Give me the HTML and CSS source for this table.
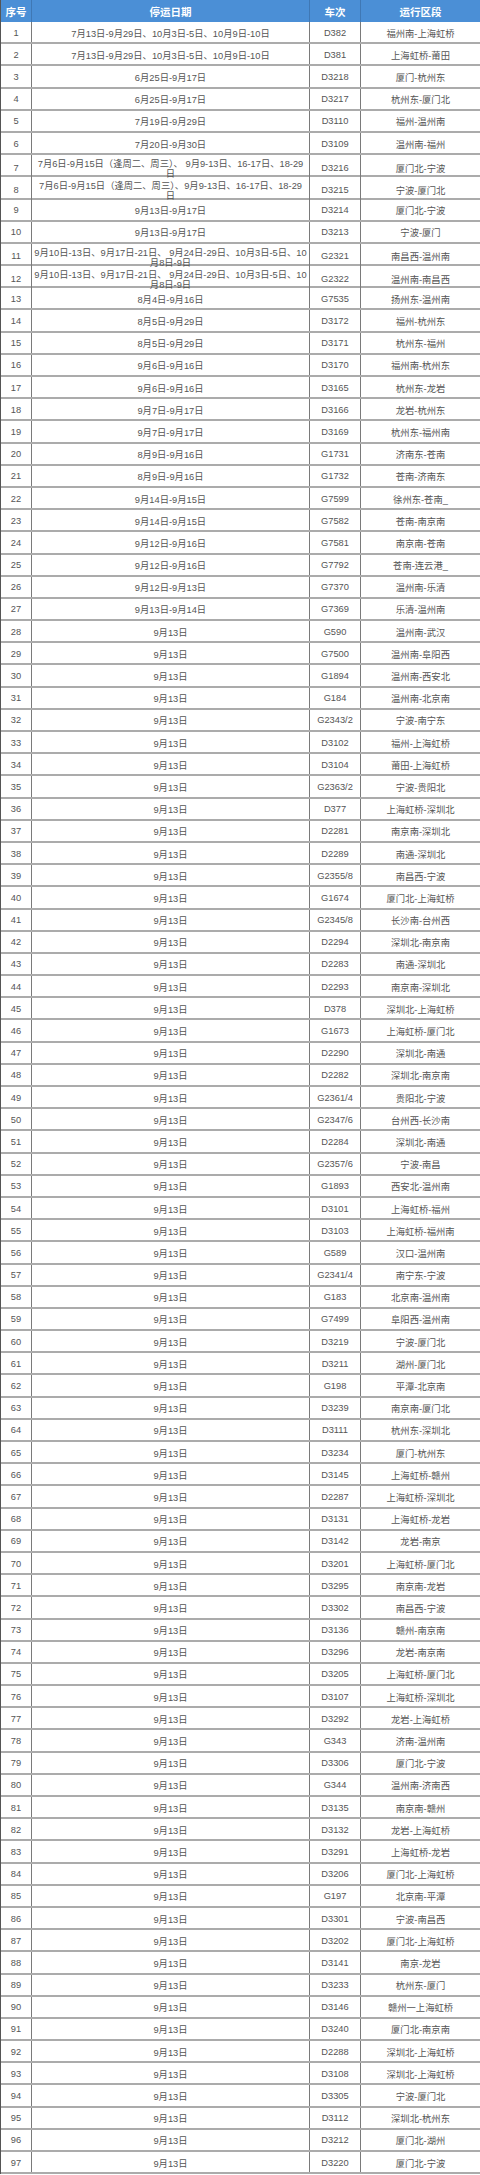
FILE: index.html
```html
<!DOCTYPE html>
<html lang="zh-CN">
<head>
<meta charset="utf-8">
<title>停运列表</title>
<link rel="stylesheet" href="styles.css">
</head>
<body>
<div class="table">
<div class="row head"><div class="c">序号</div><div class="c">停运日期</div><div class="c">车次</div><div class="c">运行区段</div></div>
<div class="row"><div class="c">1</div><div class="c">7月13日-9月29日、10月3日-5日、10月9日-10日</div><div class="c">D382</div><div class="c">福州南-上海虹桥</div></div>
<div class="row"><div class="c">2</div><div class="c">7月13日-9月29日、10月3日-5日、10月9日-10日</div><div class="c">D381</div><div class="c">上海虹桥-莆田</div></div>
<div class="row"><div class="c">3</div><div class="c">6月25日-9月17日</div><div class="c">D3218</div><div class="c">厦门-杭州东</div></div>
<div class="row"><div class="c">4</div><div class="c">6月25日-9月17日</div><div class="c">D3217</div><div class="c">杭州东-厦门北</div></div>
<div class="row"><div class="c">5</div><div class="c">7月19日-9月29日</div><div class="c">D3110</div><div class="c">福州-温州南</div></div>
<div class="row"><div class="c">6</div><div class="c">7月20日-9月30日</div><div class="c">D3109</div><div class="c">温州南-福州</div></div>
<div class="row"><div class="c">7</div><div class="c multi"><span class="ln">7月6日-9月15日（逢周二、周三）、 9月9-13日、16-17日、18-29</span><span class="ln">日</span></div><div class="c">D3216</div><div class="c">厦门北-宁波</div></div>
<div class="row"><div class="c">8</div><div class="c multi"><span class="ln">7月6日-9月15日（逢周二、周三）、9月9-13日、16-17日、18-29</span><span class="ln">日</span></div><div class="c">D3215</div><div class="c">宁波-厦门北</div></div>
<div class="row"><div class="c">9</div><div class="c">9月13日-9月17日</div><div class="c">D3214</div><div class="c">厦门北-宁波</div></div>
<div class="row"><div class="c">10</div><div class="c">9月13日-9月17日</div><div class="c">D3213</div><div class="c">宁波-厦门</div></div>
<div class="row"><div class="c">11</div><div class="c multi"><span class="ln">9月10日-13日、9月17日-21日、 9月24日-29日、10月3日-5日、10</span><span class="ln">月8日-9日</span></div><div class="c">G2321</div><div class="c">南昌西-温州南</div></div>
<div class="row"><div class="c">12</div><div class="c multi"><span class="ln">9月10日-13日、9月17日-21日、 9月24日-29日、10月3日-5日、10</span><span class="ln">月8日-9日</span></div><div class="c">G2322</div><div class="c">温州南-南昌西</div></div>
<div class="row"><div class="c">13</div><div class="c">8月4日-9月16日</div><div class="c">G7535</div><div class="c">扬州东-温州南</div></div>
<div class="row"><div class="c">14</div><div class="c">8月5日-9月29日</div><div class="c">D3172</div><div class="c">福州-杭州东</div></div>
<div class="row"><div class="c">15</div><div class="c">8月5日-9月29日</div><div class="c">D3171</div><div class="c">杭州东-福州</div></div>
<div class="row"><div class="c">16</div><div class="c">9月6日-9月16日</div><div class="c">D3170</div><div class="c">福州南-杭州东</div></div>
<div class="row"><div class="c">17</div><div class="c">9月6日-9月16日</div><div class="c">D3165</div><div class="c">杭州东-龙岩</div></div>
<div class="row"><div class="c">18</div><div class="c">9月7日-9月17日</div><div class="c">D3166</div><div class="c">龙岩-杭州东</div></div>
<div class="row"><div class="c">19</div><div class="c">9月7日-9月17日</div><div class="c">D3169</div><div class="c">杭州东-福州南</div></div>
<div class="row"><div class="c">20</div><div class="c">8月9日-9月16日</div><div class="c">G1731</div><div class="c">济南东-苍南</div></div>
<div class="row"><div class="c">21</div><div class="c">8月9日-9月16日</div><div class="c">G1732</div><div class="c">苍南-济南东</div></div>
<div class="row"><div class="c">22</div><div class="c">9月14日-9月15日</div><div class="c">G7599</div><div class="c">徐州东-苍南_</div></div>
<div class="row"><div class="c">23</div><div class="c">9月14日-9月15日</div><div class="c">G7582</div><div class="c">苍南-南京南</div></div>
<div class="row"><div class="c">24</div><div class="c">9月12日-9月16日</div><div class="c">G7581</div><div class="c">南京南-苍南</div></div>
<div class="row"><div class="c">25</div><div class="c">9月12日-9月16日</div><div class="c">G7792</div><div class="c">苍南-连云港_</div></div>
<div class="row"><div class="c">26</div><div class="c">9月12日-9月13日</div><div class="c">G7370</div><div class="c">温州南-乐清</div></div>
<div class="row"><div class="c">27</div><div class="c">9月13日-9月14日</div><div class="c">G7369</div><div class="c">乐清-温州南</div></div>
<div class="row"><div class="c">28</div><div class="c">9月13日</div><div class="c">G590</div><div class="c">温州南-武汉</div></div>
<div class="row"><div class="c">29</div><div class="c">9月13日</div><div class="c">G7500</div><div class="c">温州南-阜阳西</div></div>
<div class="row"><div class="c">30</div><div class="c">9月13日</div><div class="c">G1894</div><div class="c">温州南-西安北</div></div>
<div class="row"><div class="c">31</div><div class="c">9月13日</div><div class="c">G184</div><div class="c">温州南-北京南</div></div>
<div class="row"><div class="c">32</div><div class="c">9月13日</div><div class="c">G2343/2</div><div class="c">宁波-南宁东</div></div>
<div class="row"><div class="c">33</div><div class="c">9月13日</div><div class="c">D3102</div><div class="c">福州-上海虹桥</div></div>
<div class="row"><div class="c">34</div><div class="c">9月13日</div><div class="c">D3104</div><div class="c">莆田-上海虹桥</div></div>
<div class="row"><div class="c">35</div><div class="c">9月13日</div><div class="c">G2363/2</div><div class="c">宁波-贵阳北</div></div>
<div class="row"><div class="c">36</div><div class="c">9月13日</div><div class="c">D377</div><div class="c">上海虹桥-深圳北</div></div>
<div class="row"><div class="c">37</div><div class="c">9月13日</div><div class="c">D2281</div><div class="c">南京南-深圳北</div></div>
<div class="row"><div class="c">38</div><div class="c">9月13日</div><div class="c">D2289</div><div class="c">南通-深圳北</div></div>
<div class="row"><div class="c">39</div><div class="c">9月13日</div><div class="c">G2355/8</div><div class="c">南昌西-宁波</div></div>
<div class="row"><div class="c">40</div><div class="c">9月13日</div><div class="c">G1674</div><div class="c">厦门北-上海虹桥</div></div>
<div class="row"><div class="c">41</div><div class="c">9月13日</div><div class="c">G2345/8</div><div class="c">长沙南-台州西</div></div>
<div class="row"><div class="c">42</div><div class="c">9月13日</div><div class="c">D2294</div><div class="c">深圳北-南京南</div></div>
<div class="row"><div class="c">43</div><div class="c">9月13日</div><div class="c">D2283</div><div class="c">南通-深圳北</div></div>
<div class="row"><div class="c">44</div><div class="c">9月13日</div><div class="c">D2293</div><div class="c">南京南-深圳北</div></div>
<div class="row"><div class="c">45</div><div class="c">9月13日</div><div class="c">D378</div><div class="c">深圳北-上海虹桥</div></div>
<div class="row"><div class="c">46</div><div class="c">9月13日</div><div class="c">G1673</div><div class="c">上海虹桥-厦门北</div></div>
<div class="row"><div class="c">47</div><div class="c">9月13日</div><div class="c">D2290</div><div class="c">深圳北-南通</div></div>
<div class="row"><div class="c">48</div><div class="c">9月13日</div><div class="c">D2282</div><div class="c">深圳北-南京南</div></div>
<div class="row"><div class="c">49</div><div class="c">9月13日</div><div class="c">G2361/4</div><div class="c">贵阳北-宁波</div></div>
<div class="row"><div class="c">50</div><div class="c">9月13日</div><div class="c">G2347/6</div><div class="c">台州西-长沙南</div></div>
<div class="row"><div class="c">51</div><div class="c">9月13日</div><div class="c">D2284</div><div class="c">深圳北-南通</div></div>
<div class="row"><div class="c">52</div><div class="c">9月13日</div><div class="c">G2357/6</div><div class="c">宁波-南昌</div></div>
<div class="row"><div class="c">53</div><div class="c">9月13日</div><div class="c">G1893</div><div class="c">西安北-温州南</div></div>
<div class="row"><div class="c">54</div><div class="c">9月13日</div><div class="c">D3101</div><div class="c">上海虹桥-福州</div></div>
<div class="row"><div class="c">55</div><div class="c">9月13日</div><div class="c">D3103</div><div class="c">上海虹桥-福州南</div></div>
<div class="row"><div class="c">56</div><div class="c">9月13日</div><div class="c">G589</div><div class="c">汉口-温州南</div></div>
<div class="row"><div class="c">57</div><div class="c">9月13日</div><div class="c">G2341/4</div><div class="c">南宁东-宁波</div></div>
<div class="row"><div class="c">58</div><div class="c">9月13日</div><div class="c">G183</div><div class="c">北京南-温州南</div></div>
<div class="row"><div class="c">59</div><div class="c">9月13日</div><div class="c">G7499</div><div class="c">阜阳西-温州南</div></div>
<div class="row"><div class="c">60</div><div class="c">9月13日</div><div class="c">D3219</div><div class="c">宁波-厦门北</div></div>
<div class="row"><div class="c">61</div><div class="c">9月13日</div><div class="c">D3211</div><div class="c">湖州-厦门北</div></div>
<div class="row"><div class="c">62</div><div class="c">9月13日</div><div class="c">G198</div><div class="c">平潭-北京南</div></div>
<div class="row"><div class="c">63</div><div class="c">9月13日</div><div class="c">D3239</div><div class="c">南京南-厦门北</div></div>
<div class="row"><div class="c">64</div><div class="c">9月13日</div><div class="c">D3111</div><div class="c">杭州东-深圳北</div></div>
<div class="row"><div class="c">65</div><div class="c">9月13日</div><div class="c">D3234</div><div class="c">厦门-杭州东</div></div>
<div class="row"><div class="c">66</div><div class="c">9月13日</div><div class="c">D3145</div><div class="c">上海虹桥-赣州</div></div>
<div class="row"><div class="c">67</div><div class="c">9月13日</div><div class="c">D2287</div><div class="c">上海虹桥-深圳北</div></div>
<div class="row"><div class="c">68</div><div class="c">9月13日</div><div class="c">D3131</div><div class="c">上海虹桥-龙岩</div></div>
<div class="row"><div class="c">69</div><div class="c">9月13日</div><div class="c">D3142</div><div class="c">龙岩-南京</div></div>
<div class="row"><div class="c">70</div><div class="c">9月13日</div><div class="c">D3201</div><div class="c">上海虹桥-厦门北</div></div>
<div class="row"><div class="c">71</div><div class="c">9月13日</div><div class="c">D3295</div><div class="c">南京南-龙岩</div></div>
<div class="row"><div class="c">72</div><div class="c">9月13日</div><div class="c">D3302</div><div class="c">南昌西-宁波</div></div>
<div class="row"><div class="c">73</div><div class="c">9月13日</div><div class="c">D3136</div><div class="c">赣州-南京南</div></div>
<div class="row"><div class="c">74</div><div class="c">9月13日</div><div class="c">D3296</div><div class="c">龙岩-南京南</div></div>
<div class="row"><div class="c">75</div><div class="c">9月13日</div><div class="c">D3205</div><div class="c">上海虹桥-厦门北</div></div>
<div class="row"><div class="c">76</div><div class="c">9月13日</div><div class="c">D3107</div><div class="c">上海虹桥-深圳北</div></div>
<div class="row"><div class="c">77</div><div class="c">9月13日</div><div class="c">D3292</div><div class="c">龙岩-上海虹桥</div></div>
<div class="row"><div class="c">78</div><div class="c">9月13日</div><div class="c">G343</div><div class="c">济南-温州南</div></div>
<div class="row"><div class="c">79</div><div class="c">9月13日</div><div class="c">D3306</div><div class="c">厦门北-宁波</div></div>
<div class="row"><div class="c">80</div><div class="c">9月13日</div><div class="c">G344</div><div class="c">温州南-济南西</div></div>
<div class="row"><div class="c">81</div><div class="c">9月13日</div><div class="c">D3135</div><div class="c">南京南-赣州</div></div>
<div class="row"><div class="c">82</div><div class="c">9月13日</div><div class="c">D3132</div><div class="c">龙岩-上海虹桥</div></div>
<div class="row"><div class="c">83</div><div class="c">9月13日</div><div class="c">D3291</div><div class="c">上海虹桥-龙岩</div></div>
<div class="row"><div class="c">84</div><div class="c">9月13日</div><div class="c">D3206</div><div class="c">厦门北-上海虹桥</div></div>
<div class="row"><div class="c">85</div><div class="c">9月13日</div><div class="c">G197</div><div class="c">北京南-平潭</div></div>
<div class="row"><div class="c">86</div><div class="c">9月13日</div><div class="c">D3301</div><div class="c">宁波-南昌西</div></div>
<div class="row"><div class="c">87</div><div class="c">9月13日</div><div class="c">D3202</div><div class="c">厦门北-上海虹桥</div></div>
<div class="row"><div class="c">88</div><div class="c">9月13日</div><div class="c">D3141</div><div class="c">南京-龙岩</div></div>
<div class="row"><div class="c">89</div><div class="c">9月13日</div><div class="c">D3233</div><div class="c">杭州东-厦门</div></div>
<div class="row"><div class="c">90</div><div class="c">9月13日</div><div class="c">D3146</div><div class="c">赣州一上海虹桥</div></div>
<div class="row"><div class="c">91</div><div class="c">9月13日</div><div class="c">D3240</div><div class="c">厦门北-南京南</div></div>
<div class="row"><div class="c">92</div><div class="c">9月13日</div><div class="c">D2288</div><div class="c">深圳北-上海虹桥</div></div>
<div class="row"><div class="c">93</div><div class="c">9月13日</div><div class="c">D3108</div><div class="c">深圳北-上海虹桥</div></div>
<div class="row"><div class="c">94</div><div class="c">9月13日</div><div class="c">D3305</div><div class="c">宁波-厦门北</div></div>
<div class="row"><div class="c">95</div><div class="c">9月13日</div><div class="c">D3112</div><div class="c">深圳北-杭州东</div></div>
<div class="row"><div class="c">96</div><div class="c">9月13日</div><div class="c">D3212</div><div class="c">厦门北-湖州</div></div>
<div class="row"><div class="c">97</div><div class="c">9月13日</div><div class="c">D3220</div><div class="c">厦门北-宁波</div></div>
</div>
</body>
</html>
```
FILE: styles.css
```css
html, body {
  margin: 0;
  padding: 0;
  background: #ffffff;
}

.table {
  width: 480px;
  font-family: "Liberation Sans", "Noto Sans CJK SC", sans-serif;
  font-size: 9.3px;
  color: #555555;
  border-left: 1px solid #555555;
  box-sizing: border-box;
}

.row {
  display: grid;
  grid-template-columns: 31px 278px 51px 1fr;
  height: 22.196px;
  box-sizing: border-box;
  border-bottom: 2px solid #ababab;
}

.c {
  display: flex;
  align-items: center;
  justify-content: center;
  white-space: nowrap;
  border-right: 1px solid #7a7a7a;
  padding-top: 1px;
  overflow: visible;
}

.c:last-child {
  border-right: none;
}

.multi {
  flex-direction: column;
  line-height: 10px;
  padding-top: 4px;
}

.ln {
  display: block;
}

.head {
  height: 22px;
  background: #4b8fd6;
  border-bottom: none;
  color: #ffffff;
  font-weight: bold;
  font-size: 10.5px;
}

.head .c {
  border-right: 1px solid #3f78b5;
}

.head .c:last-child {
  border-right: none;
}
```
